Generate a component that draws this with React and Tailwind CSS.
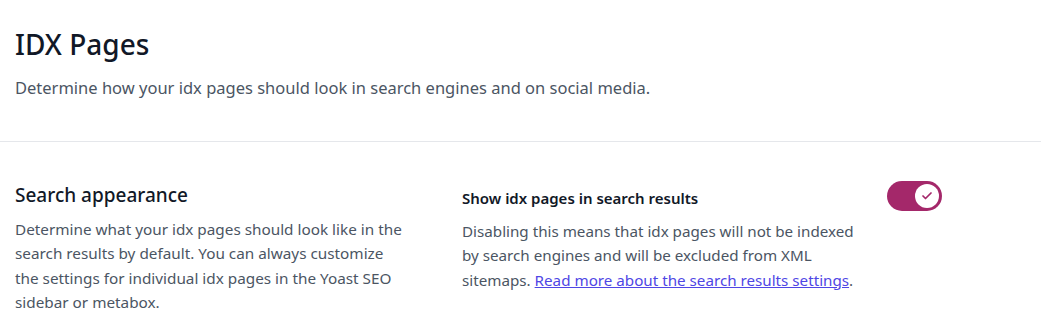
import { Check } from "lucide-react";

export default function App() {
  return (
    <div
      className="min-h-screen w-full bg-white text-[#111827]"
      style={{ fontFamily: '"Noto Sans", "Open Sans", sans-serif' }}
    >
      {/* Header */}
      <header className="px-[15px] pt-[24px] pb-[41px]">
        <h1 className="text-[28px] leading-[40px] font-medium text-[#111827]">IDX Pages</h1>
        <p className="mt-[12px] text-[16.5px] leading-[24px] text-[#4b5563]">
          Determine how your idx pages should look in search engines and on social media.
        </p>
      </header>

      <div className="border-t border-[#e5e7eb]" />

      {/* Search appearance */}
      <section className="flex px-[15px] pt-[40px]">
        <div className="w-[447px] shrink-0">
          <h2 className="text-[19px] leading-[26px] font-medium text-[#111827]">Search appearance</h2>
          <p className="mt-[9px] whitespace-nowrap text-[15.3px] leading-[24.4px] text-[#4b5563]">
            Determine what your idx pages should look like in the
            <br />
            search results by default. You can always customize
            <br />
            the settings for individual idx pages in the Yoast SEO
            <br />
            sidebar or metabox.
          </p>
        </div>

        <div className="flex w-[480px] items-start justify-between">
          <div className="max-w-[402px] pt-[4px]">
            <h3 className="text-[15px] leading-[24px] font-semibold text-[#111827]">
              Show idx pages in search results
            </h3>
            <p className="mt-[9px] text-[15.2px] leading-[24.4px] text-[#4b5563]">
              Disabling this means that idx pages will not be indexed by search engines and will be excluded
              from XML sitemaps.{" "}
              <a href="#" className="text-[#4f46e5] underline">
                Read more about the search results settings
              </a>
              .
            </p>
          </div>

          <button
            type="button"
            className="mt-[-1px] flex h-[30px] w-[55px] shrink-0 items-center justify-end rounded-full bg-[#a4286a] px-[3px]"
          >
            <span className="flex h-[24px] w-[24px] items-center justify-center rounded-full bg-white">
              <Check className="h-[12px] w-[12px] text-[#a4286a]" strokeWidth={3.5} />
            </span>
          </button>
        </div>
      </section>
    </div>
  );
}
